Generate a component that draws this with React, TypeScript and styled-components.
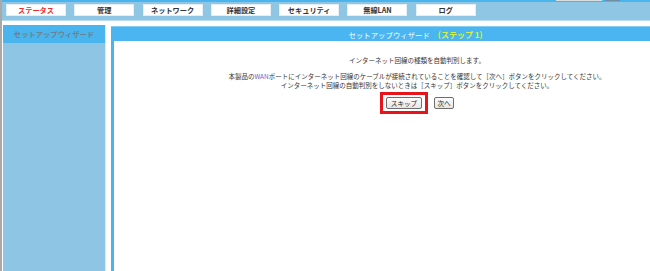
import React from 'react';
import styled, { createGlobalStyle } from 'styled-components';

const GlobalStyle = createGlobalStyle`
  html, body {
    margin: 0;
    padding: 0;
    overflow: hidden;
    background: #fff;
  }
  body {
    font-family: 'Noto Sans CJK JP', 'Liberation Sans', sans-serif;
  }
`;

const Page = styled.div`
  width: 718px;
  height: 271px;
  border-left: 2px solid #a9a9a9;
  display: flex;
  flex-direction: column;
`;

const TopStrip = styled.div`
  height: 2px;
  background: #4ab4ee;
  display: flex;
  gap: 3px;
  padding-left: 554px;
`;

const StripBit = styled.div<{ $w: number; $dark?: boolean }>`
  width: ${(p) => p.$w}px;
  height: 1px;
  background: ${(p) => (p.$dark ? '#6f8fa8' : '#d8dde2')};
`;

const NavBar = styled.div`
  height: 16px;
  background: #8ec6e4;
  border-bottom: 1px solid #b9ddf1;
  display: flex;
  align-items: flex-start;
  gap: 8.3px;
  padding: 2px 0 0 4px;
`;

const Tab = styled.div<{ $active?: boolean }>`
  width: 58px;
  height: 10px;
  background: #fff;
  border: 1px solid #e4eef5;
  display: flex;
  align-items: center;
  justify-content: center;
  font-size: 7.2px;
  font-weight: bold;
  color: ${(p) => (p.$active ? '#f42a2a' : '#333')};
`;

const Body = styled.div`
  flex: 1;
  display: flex;
  margin-top: 4px;
  padding-left: 1px;
`;

const Sidebar = styled.div`
  width: 102px;
  background: #8ec5e5;
  border-right: 1px solid #d4ebf7;
  margin-right: 5px;
`;

const SidebarTitle = styled.div`
  height: 18px;
  background: #4ab4ee;
  display: flex;
  align-items: center;
  justify-content: center;
  font-size: 7.3px;
  font-weight: bold;
  color: #6d8193;
`;

const Main = styled.div`
  flex: 1;
  margin-top: 1px;
  border-left: 3px solid #4ab4ee;
  display: flex;
  flex-direction: column;
`;

const MainHeader = styled.div`
  height: 14px;
  background: #4ab5f0;
  border-top: 1px solid #86cdf4;
  margin-left: -3px;
  display: flex;
  align-items: center;
  justify-content: center;
  gap: 8px;
  font-size: 7.4px;
  color: #fff;
`;

const Step = styled.span`
  color: #d6f04a;
  font-weight: bold;
  font-size: 8px;
`;

const Content = styled.div`
  padding-top: 14.5px;
  text-align: center;
  color: #333;
  font-size: 6.5px;
  line-height: 8.6px;
`;

const Para = styled.p<{ $gap?: number }>`
  margin: 0 0 ${(p) => p.$gap ?? 0}px;
`;

const Wan = styled.span`
  color: #6a5acd;
`;

const ButtonRow = styled.div`
  margin-top: 3px;
  display: flex;
  justify-content: center;
  align-items: center;
  gap: 6px;
`;

const Highlight = styled.div`
  border: 3px solid #e8141c;
  padding: 2px 3px;
  display: flex;
`;

const Button = styled.button<{ $w: number }>`
  width: ${(p) => p.$w}px;
  height: 12px;
  padding: 0;
  border: 1px solid #6e6e6e;
  border-radius: 2px;
  background: linear-gradient(#fcfcfc, #e6e6e6);
  font-family: inherit;
  font-size: 6.6px;
  line-height: 10px;
  color: #222;
`;

const tabs = ['ステータス', '管理', 'ネットワーク', '詳細設定', 'セキュリティ', '無線LAN', 'ログ'];

export default function App() {
  return (
    <>
      <GlobalStyle />
      <Page>
        <TopStrip>
          <StripBit $w={46} />
          <StripBit $w={15} $dark />
        </TopStrip>
        <NavBar>
          {tabs.map((t, i) => (
            <Tab key={t} $active={i === 0}>
              {t}
            </Tab>
          ))}
        </NavBar>
        <Body>
          <Sidebar>
            <SidebarTitle>セットアップウィザード</SidebarTitle>
          </Sidebar>
          <Main>
            <MainHeader>
              <span>セットアップウィザード</span>
              <Step>(ステップ 1)</Step>
            </MainHeader>
            <Content>
              <Para $gap={8}>インターネット回線の種類を自動判別します。</Para>
              <Para>
                本製品の<Wan>WAN</Wan>ポートにインターネット回線のケーブルが接続されていることを確認して［次へ］ボタンをクリックしてください。
                <br />
                インターネット回線の自動判別をしないときは［スキップ］ボタンをクリックしてください。
              </Para>
              <ButtonRow>
                <Highlight>
                  <Button $w={36}>スキップ</Button>
                </Highlight>
                <Button $w={20}>次へ</Button>
              </ButtonRow>
            </Content>
          </Main>
        </Body>
      </Page>
    </>
  );
}
